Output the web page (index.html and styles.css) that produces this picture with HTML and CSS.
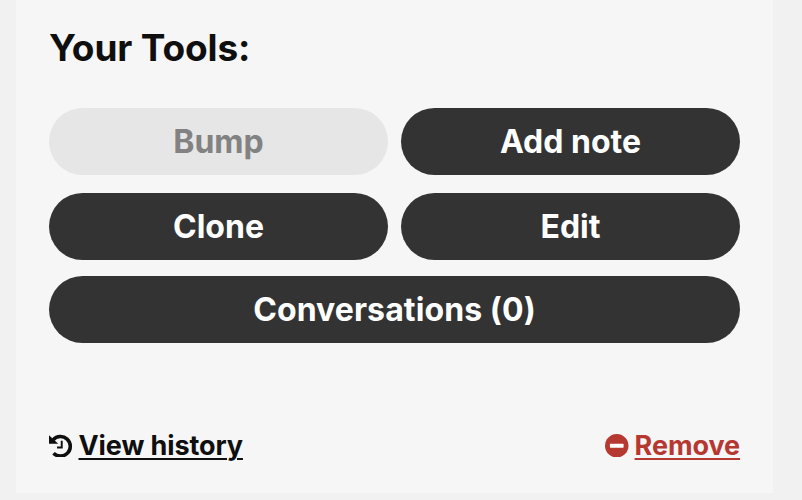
FILE: index.html
```html
<!DOCTYPE html>
<html lang="en">

<head>
    <meta charset="UTF-8">
    <meta name="viewport" content="width=device-width, initial-scale=1.0">
    <title>Your Tools</title>
    <link rel="stylesheet" href="styles.css">
</head>

<body>

    <div class="card">
        <h2>Your Tools:</h2>

        <div class="tools">
            <button type="button" class="btn" disabled>Bump</button>
            <button type="button" class="btn">Add note</button>
            <button type="button" class="btn">Clone</button>
            <button type="button" class="btn">Edit</button>
        </div>
        <button type="button" class="btn btn-wide">Conversations (0)</button>

        <div class="links">
            <a href="#" class="link history">
                <svg class="icon" viewBox="0 0 24 24" fill="none" stroke="currentColor">
                    <path d="M4.2 6A10 10 0 1 1 4.6 19.6" stroke-width="3.6" />
                    <path d="M0 1.2L9.4 9.9H0z" fill="currentColor" stroke="none" />
                    <path d="M13 7v6.7H8.2" stroke-width="2" />
                </svg>
                <span>View history</span>
            </a>
            <a href="#" class="link remove">
                <svg class="icon" viewBox="0 0 24 24">
                    <circle cx="12" cy="12" r="12" fill="currentColor" />
                    <rect x="5" y="10" width="14" height="4" rx=".6" fill="#fff" />
                </svg>
                <span>Remove</span>
            </a>
        </div>
    </div>

</body>

</html>
```

FILE: styles.css
```css
* {
    box-sizing: border-box;
    padding: 0;
    margin: 0;
}

body {
    font-family: Inter, sans-serif;
    background-color: #f1f1f1;
    color: #0f0f0f;
}

.card {
    width: 757px;
    height: 493px;
    margin-left: 16px;
    padding: 24px 33px 0;
    background-color: #f6f6f6;
}

h2 {
    font-size: 37px;
    line-height: 48px;
    font-weight: 700;
    letter-spacing: -0.15px;
    margin-bottom: 36px;
}

.tools {
    display: grid;
    grid-template-columns: 1fr 1fr;
    gap: 18px 13px;
    margin-bottom: 16px;
}

.btn {
    height: 67px;
    border: 0;
    border-radius: 34px;
    background-color: #333;
    color: #fff;
    font-family: inherit;
    font-size: 32px;
    font-weight: 700;
    cursor: pointer;
}

.btn:disabled {
    background-color: #e6e6e6;
    color: #828282;
    cursor: default;
}

.btn-wide {
    display: block;
    width: 100%;
    letter-spacing: 0.1px;
}

.links {
    display: flex;
    justify-content: space-between;
    margin-top: 87px;
}

.link {
    display: flex;
    align-items: center;
    gap: 6px;
    color: inherit;
    font-size: 27px;
    line-height: 32px;
    font-weight: 700;
    letter-spacing: -0.1px;
    text-decoration: none;
}

.link span {
    text-decoration: underline;
    text-decoration-thickness: 2px;
    text-underline-offset: 3px;
}

.remove {
    color: #b53931;
}

.icon {
    width: 23.5px;
    height: 23.5px;
    margin-top: -1px;
}
```
